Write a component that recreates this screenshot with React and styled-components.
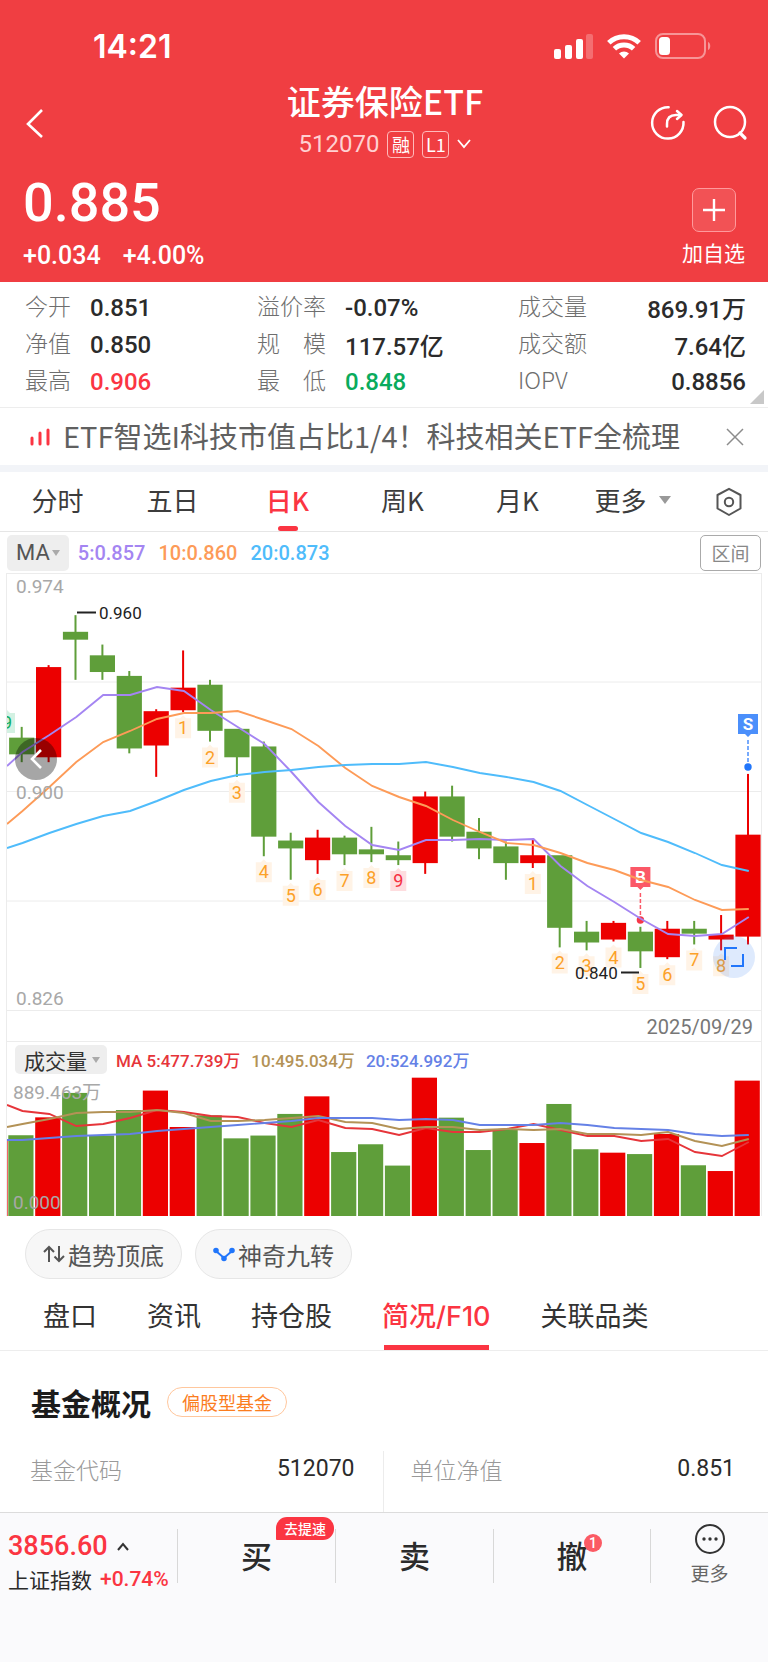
import React, { useState } from 'react';
import styled, { createGlobalStyle, css } from 'styled-components';

const GlobalStyle = createGlobalStyle`
  * {
    box-sizing: border-box;
  }
  body {
    margin: 0;
    background-color: white;
    color: #2b2b2b;
    font-family: 'Noto Sans CJK SC', sans-serif;
  }
  button {
    margin: 0;
    padding: 0;
    border: 0;
    background: none;
    color: inherit;
    font-family: inherit;
    cursor: pointer;
  }
  svg {
    display: block;
  }
`;

const numberFont = css`
  font-family: Roboto, 'Noto Sans CJK SC', sans-serif;
  font-weight: 500;
`;
const RED = '#fb3542';
const UP = '#ec0000';
const DOWN = '#5f9e3a';

const FlexRow = styled.div`
  display: flex;
  align-items: center;
`;

/* header */
const Header = styled.header`
  background-color: #f03e42;
  color: white;
`;
const StatusBar = styled(FlexRow)`
  height: 82px;
  padding: 10px 56px 0 93px;
  justify-content: space-between;
`;
const Clock = styled.div`
  font-family: Inter, sans-serif;
  font-size: 32px;
  font-weight: 600;
`;
const StatusIcons = styled(FlexRow)`
  gap: 14px;
`;
const NavBar = styled(FlexRow)`
  height: 82px;
  padding: 0 20px 0 22px;
`;
const NavSide = styled(FlexRow)`
  flex: 1;
  gap: 26px;
  justify-content: ${(props) => (props.$end ? 'flex-end' : 'flex-start')};
`;
const NavTitle = styled.div`
  text-align: center;
`;
const Title = styled.h1`
  margin: 0;
  padding-bottom: 4px;
  font-size: 34px;
  font-weight: 500;
  line-height: 38px;
`;
const SubTitle = styled(FlexRow)`
  height: 40px;
  gap: 8px;
  justify-content: center;
`;
const Code = styled.span`
  ${numberFont}
  font-weight: 400;
  font-size: 24px;
  color: #ffd0d1;
`;
const Tag = styled.span`
  display: flex;
  align-items: center;
  justify-content: center;
  width: 27px;
  height: 27px;
  border: 1px solid #ffb9ba;
  border-radius: 4px;
  font-size: 18px;
  line-height: 24px;
`;
const MoreButton = styled.button`
  padding: 4px 0;
`;
const PriceRow = styled.div`
  display: flex;
  justify-content: space-between;
  padding: 0 23px 12px;
`;
const Price = styled.div`
  ${numberFont}
  font-size: 54px;
  line-height: 78px;
`;
const Changes = styled(FlexRow)`
  ${numberFont}
  gap: 22px;
  font-size: 25px;
  line-height: 28px;
`;
const AddButton = styled.button`
  display: flex;
  flex-direction: column;
  align-items: center;
  gap: 6px;
  padding-top: 24px;
  font-size: 21px;
  line-height: 28px;
`;
const AddBox = styled.span`
  display: flex;
  align-items: center;
  justify-content: center;
  width: 44px;
  height: 44px;
  border: 1px solid #ff9a9c;
  border-radius: 7px;
  background-color: #f25255;
`;

/* quotes */
const Quotes = styled.dl`
  position: relative;
  display: grid;
  grid-template-columns: 232fr 261fr 228fr;
  margin: 0;
  padding: 7px 22px 7px 25px;
  border-bottom: 1px solid #ededed;
`;
const Quote = styled(FlexRow)`
  height: 37px;
  gap: 19px;
  justify-content: ${(props) => (props.$spread ? 'space-between' : 'flex-start')};
`;
const QuoteName = styled.dt`
  display: flex;
  justify-content: space-between;
  min-width: ${(props) => (props.$wide ? '69px' : '46px')};
  padding-bottom: 5px;
  font-size: 23px;
  font-weight: 300;
  color: #6e6e6e;
`;
const QuoteValue = styled.dd`
  ${numberFont}
  margin: 0;
  font-size: 24px;
  color: ${(props) => props.color || '#2b2b2b'};
`;
const Corner = styled.span`
  position: absolute;
  right: 4px;
  bottom: 3px;
  border-left: 14px solid transparent;
  border-bottom: 14px solid #c8c8c8;
`;

const Banner = styled(FlexRow)`
  height: 57px;
  padding: 0 22px 0 30px;
  font-size: 29px;
  color: #606060;
`;
const BannerText = styled.a`
  flex: 1;
  margin-left: 13px;
  padding-bottom: 3px;
  color: inherit;
  text-decoration: none;
  white-space: nowrap;
`;
const Band = styled.div`
  height: 7px;
  background-color: #f2f4f8;
`;

/* chart tabs */
const Periods = styled.nav`
  display: flex;
  height: 60px;
  border-bottom: 1px solid #e6e6e6;
`;
const Period = styled.button`
  position: relative;
  display: flex;
  flex: 115 0 0;
  align-items: center;
  justify-content: center;
  gap: 12px;
  padding-bottom: 4px;
  font-size: 26px;
  color: #3c3c3c;
  ${(props) =>
    props.$active &&
    css`
      color: ${RED};
      font-weight: 500;
      &::after {
        content: '';
        position: absolute;
        bottom: 0;
        width: 20px;
        height: 5px;
        border-radius: 3px;
        background-color: ${RED};
      }
    `}
`;
const Setting = styled.button`
  display: flex;
  flex: 78 0 0;
  align-items: center;
  justify-content: center;
`;
const Caret = styled.span`
  border: ${(props) => props.$size}px solid transparent;
  border-top: ${(props) => props.$size + 2}px solid ${(props) => props.color || '#aaa'};
  border-bottom: 0;
`;

const Indicators = styled(FlexRow)`
  ${numberFont}
  height: 41px;
  gap: 13px;
  padding: 0 7px;
  font-size: 20px;
`;
const IndicatorButton = styled.button`
  ${numberFont}
  display: flex;
  align-items: center;
  justify-content: center;
  gap: 2px;
  height: 36px;
  padding: 0 9px;
  border-radius: 5px;
  background-color: #eee;
  color: #555;
  font-size: 22px;
  font-weight: 400;
  margin-right: -4px;
  ${(props) =>
    props.$small &&
    css`
      gap: 5px;
      height: 29px;
      padding: 0 7px 0 9px;
      margin-right: -2px;
      color: #333;
      font-size: 21px;
    `}
`;
const RangeButton = styled.button`
  width: 61px;
  height: 36px;
  margin-left: auto;
  border: 1px solid #aaa;
  border-radius: 5px;
  font-size: 19px;
  color: #888;
`;
const Value = styled.span`
  color: ${(props) => props.color};
`;

/* charts */
const ChartFrame = styled.section`
  margin: 0 6px;
  border: 1px solid #ececec;
  border-bottom: 0;
`;
const PriceArea = styled.div`
  position: relative;
`;
const ChartSvg = styled.svg`
  width: 100%;
  height: auto;
  overflow: hidden;
  font-family: Roboto, 'Noto Sans CJK SC', sans-serif;
`;
const RoundButton = styled.button`
  position: absolute;
  display: flex;
  align-items: center;
  justify-content: center;
  width: 42px;
  height: 42px;
  border-radius: 50%;
`;
const PrevButton = styled(RoundButton)`
  left: 8px;
  top: 164px;
  background-color: rgba(0, 0, 0, 0.35);
`;
const ExpandButton = styled(RoundButton)`
  right: 6px;
  bottom: 32px;
  background-color: rgba(60, 130, 245, 0.17);
`;
const DateRow = styled.div`
  ${numberFont}
  height: 32px;
  padding-right: 8px;
  border-top: 1px solid #ececec;
  border-bottom: 1px solid #ececec;
  font-size: 20px;
  font-weight: 400;
  line-height: 32px;
  text-align: right;
  color: #777;
`;
const VolumeHead = styled(FlexRow)`
  ${numberFont}
  height: 35px;
  gap: 11px;
  padding: 0 8px;
  font-size: 17px;
`;

const Chips = styled(FlexRow)`
  gap: 13px;
  padding: 13px 25px 0;
`;
const Chip = styled.button`
  display: flex;
  align-items: center;
  justify-content: center;
  gap: 3px;
  width: 157px;
  height: 50px;
  border: 1px solid #e6e6e6;
  border-radius: 25px;
  background-color: #f7f7f7;
  font-size: 24px;
  color: #555;
`;

/* fund info */
const InfoTabs = styled.nav`
  display: flex;
  gap: 50px;
  height: 72px;
  padding-left: 43px;
  border-bottom: 1px solid #ededed;
`;
const InfoTab = styled.button`
  position: relative;
  font-family: Inter, 'Noto Sans CJK SC', sans-serif;
  font-size: 27px;
  white-space: nowrap;
  color: #333;
  ${(props) =>
    props.$active &&
    css`
      color: ${RED};
      font-weight: 500;
      &::after {
        content: '';
        position: absolute;
        left: 2px;
        right: 2px;
        bottom: 0;
        height: 5px;
        background-color: ${RED};
      }
    `}
`;
const FundHead = styled(FlexRow)`
  height: 100px;
  gap: 16px;
  padding: 2px 31px 0;
`;
const FundTitle = styled.h2`
  margin: 0;
  font-size: 30px;
  font-weight: 700;
  color: #1c1c1c;
`;
const FundType = styled.span`
  padding: 0 14px;
  border: 1px solid #ffc79d;
  border-radius: 15px;
  font-size: 18px;
  line-height: 28px;
  color: #fb7d1e;
`;
const FundRow = styled.dl`
  display: flex;
  margin: 0;
  height: 61px;
`;
const FundCell = styled.div`
  display: flex;
  flex: 1;
  justify-content: space-between;
  padding: 0 28px 0 30px;
  line-height: 36px;
  & + & {
    border-left: 1px solid #ececec;
    padding: 0 33px 0 27px;
  }
`;
const FundName = styled.dt`
  font-size: 23px;
  font-weight: 300;
  color: #999;
`;
const FundValue = styled.dd`
  ${numberFont}
  margin: 0;
  font-size: 23px;
  font-weight: 400;
`;

/* bottom bar */
const BottomBar = styled.footer`
  display: grid;
  grid-template-columns: 177fr 158fr 158fr 157fr 118fr;
  align-items: start;
  height: 150px;
  border-top: 1px solid #dcdcdc;
  background-color: #fafafc;
`;
const IndexBox = styled.div`
  padding: 17px 0 0 8px;
  white-space: nowrap;
`;
const IndexPrice = styled(FlexRow)`
  ${numberFont}
  gap: 9px;
  font-size: 27px;
  line-height: 33px;
  color: ${RED};
`;
const IndexName = styled(FlexRow)`
  gap: 8px;
  font-size: 21px;
  line-height: 32px;
  span {
    ${numberFont}
    color: ${RED};
  }
`;
const Trade = styled.button`
  position: relative;
  height: 54px;
  margin-top: 16px;
  padding-bottom: 4px;
  border-left: 1px solid #d8d8d8;
  font-size: 31px;
  font-weight: 500;
  color: #2b2b2b;
`;
const SpeedBadge = styled.span`
  position: absolute;
  right: 1px;
  top: -12px;
  padding: 0 8px;
  border-radius: 11px 11px 11px 1px;
  background-color: ${RED};
  color: white;
  font-size: 14px;
  line-height: 23px;
`;
const CountBadge = styled.span`
  position: absolute;
  left: 50%;
  top: 5px;
  width: 18px;
  height: 18px;
  margin-left: 12px;
  border-radius: 50%;
  background-color: #fb5a64;
  color: white;
  font-family: Roboto, sans-serif;
  font-size: 14px;
  line-height: 18px;
`;
const BottomMore = styled.button`
  display: flex;
  flex-direction: column;
  align-items: center;
  height: 54px;
  margin-top: 16px;
  border-left: 1px solid #d8d8d8;
  font-size: 19px;
  line-height: 28px;
  color: #666;
  svg {
    flex: none;
    margin: -6px 0 4px;
  }
`;

// [open, close, high, low] in thousandths
const candles = [
  [918, 913, 922, 910],
  [912, 942, 943, 910],
  [954, 952, 960, 938],
  [946, 941, 950, 938],
  [939, 915, 941, 913],
  [916, 927, 928, 905],
  [928, 935, 948, 927],
  [936, 921, 938, 917],
  [921, 912, 921, 905],
  [915, 885, 917, 878],
  [883, 881, 886, 870],
  [877, 884, 887, 872],
  [884, 879, 885, 875],
  [880, 879, 888, 876],
  [878, 877, 883, 875],
  [876, 898, 900, 872],
  [898, 885, 902, 883],
  [886, 881, 891, 877],
  [881, 876, 883, 870],
  [876, 878, 884, 874],
  [878, 854, 878, 847],
  [852, 849, 856, 846],
  [850, 855, 856, 849],
  [852, 846, 854, 840],
  [844, 853, 856, 843],
  [853, 852, 856, 848],
  [850, 851, 858, 846],
  [851, 885, 906, 848],
];
const volumes = [
  519, 634, 791, 517, 681, 806, 572, 647, 499, 517, 656, 769, 411, 461, 324,
  889, 632, 424, 557, 469, 720, 429, 407, 398, 527, 326, 289, 870,
];
// nine-turn counts by candle index
const turns = {
  6: 1, 7: 2, 8: 3, 9: 4, 10: 5, 11: 6, 12: 7, 13: 8, 14: 9,
  19: 1, 20: 2, 21: 3, 22: 4, 23: 5, 24: 6, 25: 7, 26: 8,
};

// moving averages, the first point lies on the left edge
const priceLines = [
  {
    color: '#a485f2',
    points: [
      192, 178, 161, 143, 121, 121, 113, 117, 136, 153, 170, 198, 228, 252, 271,
      276, 266, 266, 265, 266, 265, 292, 312, 328, 345, 360, 362, 360, 343,
    ],
  },
  {
    color: '#fd9b58',
    points: [
      250, 237, 213, 188, 168, 157, 145, 139, 139, 137, 146, 155, 172, 194, 212,
      223, 232, 246, 258, 269, 271, 279, 289, 296, 306, 313, 326, 336, 335,
    ],
  },
  {
    color: '#4fbcfb',
    points: [
      274, 269, 259, 250, 242, 237, 227, 216, 207, 201, 198, 196, 193, 191, 190,
      190, 188, 193, 199, 203, 208, 217, 231, 245, 259, 268, 279, 291, 297,
    ],
  },
];
const volumeLines = [
  {
    color: '#e6353a',
    points: [
      28, 34, 37, 49, 47, 41, 33, 35, 39, 40, 46, 50, 43, 51, 52, 58, 51, 55, 55,
      52, 47, 53, 59, 59, 64, 62, 75, 79, 65,
    ],
  },
  {
    color: '#b39256',
    points: [
      50, 47, 42, 36, 35, 35, 33, 36, 44, 44, 43, 41, 39, 45, 46, 52, 50, 50, 53,
      52, 53, 52, 57, 57, 58, 55, 64, 69, 62,
    ],
  },
  {
    color: '#6581e6',
    points: [
      63, 63, 61, 59, 58, 57, 54, 52, 50, 48, 46, 44, 41, 41, 41, 43, 42, 43, 48,
      48, 48, 46, 48, 51, 52, 53, 57, 59, 58,
    ],
  },
];

const STEP = 26.9;
const getX = (i) => 14.7 + STEP * i;
const getY = (price) => (974 - price) * 2.94;
const toPoints = (points) =>
  points.map((y, i) => `${i === 0 ? 0 : getX(i - 1) + 0.8},${y}`).join(' ');

const Lines = ({ lines }) =>
  lines.map((line) => (
    <polyline
      key={line.color}
      points={toPoints(line.points)}
      fill="none"
      stroke={line.color}
      strokeWidth="1.9"
    />
  ));

const Candle = ({ i, data }) => {
  const [open, close, high, low] = data;
  const color = close > open ? UP : DOWN;
  const top = getY(Math.max(open, close)) - 1;
  const bottom = getY(Math.min(open, close)) + 1;
  return (
    <g fill={color}>
      <rect x={getX(i) - 1} y={getY(high)} width="2" height={getY(low) - getY(high)} />
      <rect x={getX(i) - 12.6} y={top} width="25.2" height={bottom - top} />
    </g>
  );
};

const Turn = ({ x, y, count, color, bg }) => (
  <g>
    <path d={`M${x - 8} ${y + 6}h5l3-3 3 3h5v20h-16z`} fill={bg} />
    <text x={x} y={y + 22} fontSize="18" textAnchor="middle" fill={color}>
      {count}
    </text>
  </g>
);

const Flag = ({ x, y, dot, letter, color, dotColor }) => (
  <g>
    <path d={`M${x - 10} ${y}h20v20h-7l-3 3-3-3h-7z`} fill={color} />
    <text x={x} y={y + 16} fontSize="17" fontWeight="700" textAnchor="middle" fill="white">
      {letter}
    </text>
    <path d={`M${x} ${y + 26}V${dot}`} stroke={color} strokeWidth="1.5" strokeDasharray="4 2" />
    <circle cx={x} cy={dot} r="3.7" fill={dotColor} />
  </g>
);

const PriceChart = () => (
  <ChartSvg viewBox="0 0 754 436" role="img" aria-label="日K">
    {[108, 217.5, 327].map((y) => (
      <path key={y} d={`M0 ${y}h754`} stroke="#ececec" />
    ))}
    <Turn x={0} y={133} count={9} color="#12ad62" bg="#d3f1e2" />
    {candles.map((data, i) => (
      <Candle key={i} i={i} data={data} />
    ))}
    {Object.keys(turns).map((i) => (
      <Turn
        key={i}
        x={getX(Number(i))}
        y={getY(candles[i][3])}
        count={turns[i]}
        color={turns[i] === 9 ? '#f5303f' : '#fca128'}
        bg={turns[i] === 9 ? '#fedddf' : '#fff3e6'}
      />
    ))}
    <Flag x={getX(27)} y={140} dot={193} letter="S" color="#4b8ffb" dotColor="#2176fb" />
    <Flag x={getX(23)} y={293} dot={346} letter="B" color="#fb5867" dotColor="#f63849" />
    <Lines lines={priceLines} />
    <g fontSize="19" fill="#a8a8a8">
      <text x="9" y="19">0.974</text>
      <text x="9" y="225">0.900</text>
      <text x="9" y="431">0.826</text>
    </g>
    <g fontSize="17" fill="#222">
      <text x="92" y="45">0.960</text>
      <text x="568" y="405">0.840</text>
    </g>
    <path d="M70 38.5h19M614 398.5h18" stroke="#222" strokeWidth="1.8" />
  </ChartSvg>
);

const VolumeChart = () => (
  <ChartSvg viewBox="0 0 754 139" role="img" aria-label="成交量">
    <rect x="-1" y="62" width="1.6" height="77" fill={UP} />
    {volumes.map((volume, i) => {
      const height = (volume / 889.463) * 138.4;
      return (
        <rect
          key={i}
          x={getX(i) - 13.4}
          y={139 - height}
          width="25.2"
          height={height}
          fill={candles[i][1] > candles[i][0] ? UP : DOWN}
        />
      );
    })}
    <Lines lines={volumeLines} />
    <g fontSize="19" fill="#a8a8a8">
      <text x="6" y="22">889.463万</text>
      <text x="6" y="132">0.000</text>
    </g>
  </ChartSvg>
);

const quotes = [
  { name: '今开', value: '0.851' },
  { name: '溢价率', value: '-0.07%' },
  { name: '成交量', value: '869.91万' },
  { name: '净值', value: '0.850' },
  { name: '规模', value: '117.57亿' },
  { name: '成交额', value: '7.64亿' },
  { name: '最高', value: '0.906', color: RED },
  { name: '最低', value: '0.848', color: '#0aab5c' },
  { name: 'IOPV', value: '0.8856' },
];

const App = () => {
  const [period, setPeriod] = useState('日K');
  const [tab, setTab] = useState('简况/F10');

  return (
    <>
      <GlobalStyle />
      <Header>
        <StatusBar>
          <Clock>14:21</Clock>
          <StatusIcons>
            <svg width="39" height="26" viewBox="0 0 39 26" fill="white">
              <rect x="0" y="16" width="7" height="10" rx="2" />
              <rect x="11" y="12" width="7" height="14" rx="2" />
              <rect x="22" y="6" width="7" height="20" rx="2" />
              <rect x="32" y="1" width="7" height="25" rx="2" opacity="0.25" />
            </svg>
            <svg width="34" height="26" viewBox="0 0 34 26" fill="none" stroke="white" strokeWidth="5">
              <path d="M1.8 9.8a22 22 0 0 1 30.4 0" />
              <path d="M7.4 15.7a14 14 0 0 1 19.2 0" />
              <path d="M17 25.5l-5-5a7.2 7.2 0 0 1 10 0z" fill="white" stroke="none" />
            </svg>
            <svg width="57" height="26" viewBox="0 0 57 26">
              <rect x="1" y="1" width="49" height="24" rx="7" fill="none" stroke="white" strokeOpacity="0.45" strokeWidth="2" />
              <path d="M53 9c3 1 3 7 0 8z" fill="white" opacity="0.45" />
              <rect x="4" y="4" width="11" height="18" rx="3.5" fill="white" />
            </svg>
          </StatusIcons>
        </StatusBar>
        <NavBar>
          <NavSide>
            <button type="button" aria-label="返回">
              <svg width="26" height="32" viewBox="0 0 26 32" fill="none" stroke="white" strokeWidth="2.6">
                <path d="M20 3L6 17l14 13" />
              </svg>
            </button>
          </NavSide>
          <NavTitle>
            <Title>证券保险ETF</Title>
            <SubTitle>
              <Code>512070</Code>
              <Tag>融</Tag>
              <Tag>L1</Tag>
              <MoreButton type="button" aria-label="展开">
                <svg width="14" height="10" viewBox="0 0 14 10" fill="none" stroke="white" strokeWidth="1.8">
                  <path d="M1 1l6 7 6-7" />
                </svg>
              </MoreButton>
            </SubTitle>
          </NavTitle>
          <NavSide $end>
            <button type="button" aria-label="分享">
              <svg width="36" height="36" viewBox="0 0 36 36" fill="none" stroke="white" strokeWidth="2.5" strokeLinecap="round">
                <path d="M18.600 2.200A15.700 15.700 0 1 0 33.500 17" />
                <path d="M17 21.500v-2.500q0-9 9-9h5" />
                <path d="M27 6l4.500 4-4.500 4" strokeLinejoin="round" />
              </svg>
            </button>
            <button type="button" aria-label="搜索">
              <svg width="36" height="36" viewBox="0 0 36 36" fill="none" stroke="white" strokeWidth="2.5">
                <circle cx="18" cy="17" r="15" />
                <path d="M28 28l5 5" strokeWidth="3.2" strokeLinecap="round" />
              </svg>
            </button>
          </NavSide>
        </NavBar>
        <PriceRow>
          <div>
            <Price>0.885</Price>
            <Changes>
              <span>+0.034</span>
              <span>+4.00%</span>
            </Changes>
          </div>
          <AddButton type="button">
            <AddBox>
              <svg width="22" height="22" viewBox="0 0 22 22" stroke="white" strokeWidth="2.4">
                <path d="M11 0v22M0 11h22" />
              </svg>
            </AddBox>
            加自选
          </AddButton>
        </PriceRow>
      </Header>

      <Quotes>
        {quotes.map(({ name, value, color }, i) => (
          <Quote key={name} $spread={i % 3 === 2}>
            <QuoteName $wide={i % 3 === 1}>
              {i % 3 === 1 ? [...name].map((x) => <span key={x}>{x}</span>) : name}
            </QuoteName>
            <QuoteValue color={color}>{value}</QuoteValue>
          </Quote>
        ))}
        <Corner />
      </Quotes>

      <Banner>
        <svg width="20" height="18" viewBox="0 0 20 18" stroke={RED} strokeWidth="3" strokeLinecap="round">
          <path d="M2 10v6M10 5v11M18 2v14" />
        </svg>
        <BannerText href="#">ETF智选I科技市值占比1/4！科技相关ETF全梳理</BannerText>
        <button type="button" aria-label="关闭">
          <svg width="22" height="18" viewBox="0 0 22 18" stroke="#8c8c8c" strokeWidth="1.5">
            <path d="M3 1l16 16M19 1L3 17" />
          </svg>
        </button>
      </Banner>
      <Band />

      <Periods>
        {['分时', '五日', '日K', '周K', '月K'].map((x) => (
          <Period key={x} type="button" $active={x === period} onClick={() => setPeriod(x)}>
            {x}
          </Period>
        ))}
        <Period type="button">
          更多
          <Caret $size={6} color="#999" />
        </Period>
        <Setting type="button" aria-label="设置">
          <svg width="28" height="30" viewBox="0 0 28 30" fill="none" stroke="#555" strokeWidth="2" strokeLinejoin="round">
            <path d="M14 1.800L25.500 8v13.500L14 28 2.500 21.500V8z" />
            <circle cx="14" cy="15" r="4.200" />
          </svg>
        </Setting>
      </Periods>

      <Indicators>
        <IndicatorButton type="button">
          MA
          <Caret $size={4} />
        </IndicatorButton>
        <Value color="#a485f2">5:0.857</Value>
        <Value color="#fd9b58">10:0.860</Value>
        <Value color="#4fbcfb">20:0.873</Value>
        <RangeButton type="button">区间</RangeButton>
      </Indicators>

      <ChartFrame>
        <PriceArea>
          <PriceChart />
          <PrevButton type="button" aria-label="上一段">
            <svg width="14" height="20" viewBox="0 0 14 20" fill="none" stroke="white" strokeWidth="2.6">
              <path d="M12 1L3 10l9 9" />
            </svg>
          </PrevButton>
          <ExpandButton type="button" aria-label="全屏">
            <svg width="20" height="20" viewBox="0 0 20 20" fill="none" stroke="#2176fb" strokeWidth="2">
              <path d="M1 13V1h12M19 7v12H7" />
            </svg>
          </ExpandButton>
        </PriceArea>
        <DateRow>2025/09/29</DateRow>
        <VolumeHead>
          <IndicatorButton type="button" $small>
            成交量
            <Caret $size={4} />
          </IndicatorButton>
          <Value color="#e6353a">MA 5:477.739万</Value>
          <Value color="#b39256">10:495.034万</Value>
          <Value color="#6581e6">20:524.992万</Value>
        </VolumeHead>
        <VolumeChart />
      </ChartFrame>

      <Chips>
        <Chip type="button">
          <svg width="22" height="18" viewBox="0 0 22 18" fill="none" stroke="#555" strokeWidth="2">
            <path d="M6 17V2M1 7l5-5 5 5M16 1v15M11.500 11.500l4.500 4.500 5-5" />
          </svg>
          趋势顶底
        </Chip>
        <Chip type="button">
          <svg width="22" height="15" viewBox="0 0 22 15" fill="#2176fb" stroke="#2176fb" strokeWidth="2">
            <path d="M3 4l8 7 8-7" fill="none" />
            <circle cx="3" cy="3.500" r="1.800" />
            <circle cx="11" cy="11.500" r="1.800" />
            <circle cx="19" cy="3.500" r="1.800" />
          </svg>
          神奇九转
        </Chip>
      </Chips>

      <InfoTabs>
        {['盘口', '资讯', '持仓股', '简况/F10', '关联品类'].map((x) => (
          <InfoTab key={x} type="button" $active={x === tab} onClick={() => setTab(x)}>
            {x}
          </InfoTab>
        ))}
      </InfoTabs>

      <FundHead>
        <FundTitle>基金概况</FundTitle>
        <FundType>偏股型基金</FundType>
      </FundHead>
      <FundRow>
        <FundCell>
          <FundName>基金代码</FundName>
          <FundValue>512070</FundValue>
        </FundCell>
        <FundCell>
          <FundName>单位净值</FundName>
          <FundValue>0.851</FundValue>
        </FundCell>
      </FundRow>

      <BottomBar>
        <IndexBox>
          <IndexPrice>
            3856.60
            <svg width="12" height="9" viewBox="0 0 12 9" fill="none" stroke="#333" strokeWidth="2">
              <path d="M1 8l5-6 5 6" />
            </svg>
          </IndexPrice>
          <IndexName>
            上证指数
            <span>+0.74%</span>
          </IndexName>
        </IndexBox>
        <Trade type="button">
          买<SpeedBadge>去提速</SpeedBadge>
        </Trade>
        <Trade type="button">卖</Trade>
        <Trade type="button">
          撤<CountBadge>1</CountBadge>
        </Trade>
        <BottomMore type="button">
          <svg width="32" height="32" viewBox="0 0 32 32" fill="#333">
            <circle cx="16" cy="16" r="14" fill="none" stroke="#333" strokeWidth="2" />
            <circle cx="10" cy="16" r="1.700" />
            <circle cx="16" cy="16" r="1.700" />
            <circle cx="22" cy="16" r="1.700" />
          </svg>
          更多
        </BottomMore>
      </BottomBar>
    </>
  );
};

export default App;
